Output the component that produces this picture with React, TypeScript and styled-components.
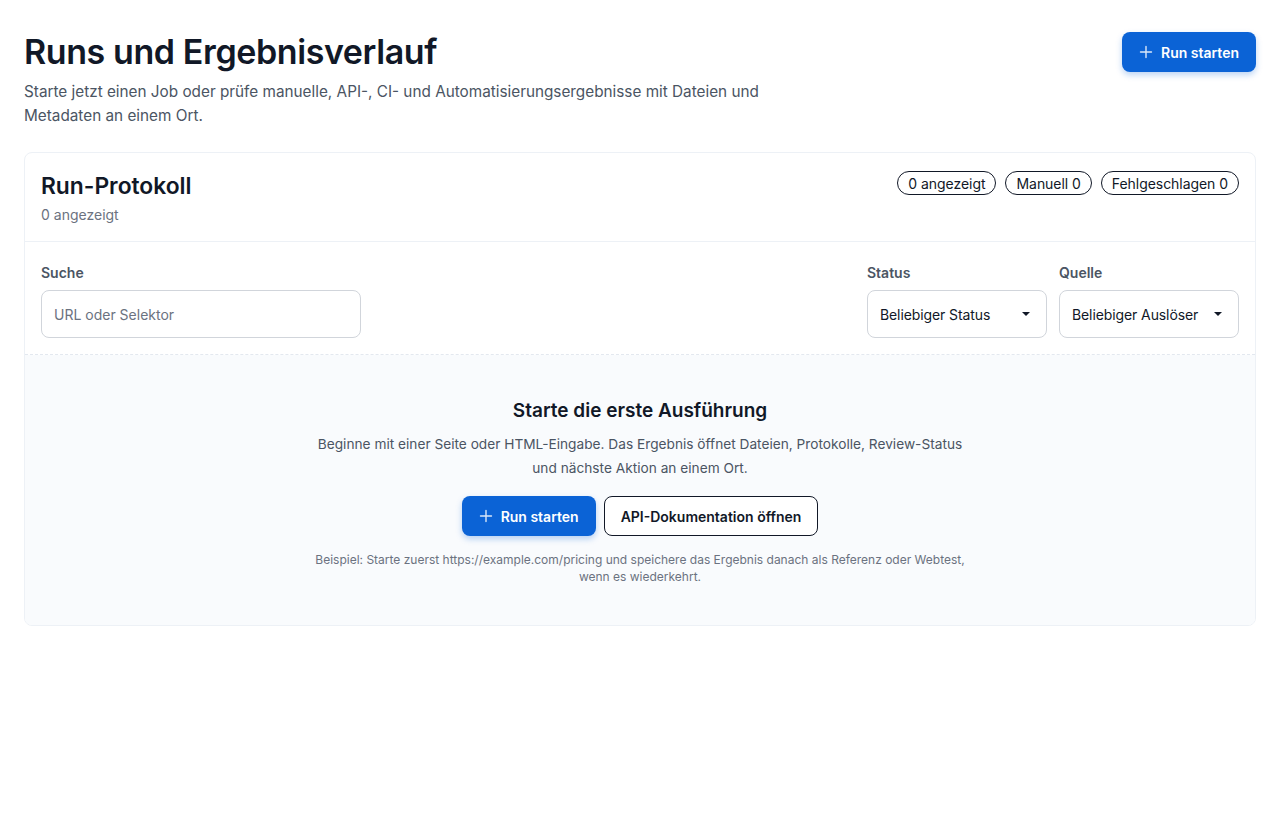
import React from "react";
import styled, { createGlobalStyle } from "styled-components";

const Global = createGlobalStyle`
  * { box-sizing: border-box; }
  html, body { margin: 0; padding: 0; background: #ffffff; }
  body {
    font-family: Inter, "Noto Sans", "Liberation Sans", sans-serif;
    color: #111827;
    -webkit-font-smoothing: antialiased;
  }
`;

const Page = styled.main`
  padding: 32px 24px 24px;
  display: flex;
  flex-direction: column;
  gap: 24px;
`;

const Header = styled.header`
  display: flex;
  justify-content: space-between;
  align-items: flex-start;
`;

const TitleBlock = styled.div`
  display: flex;
  flex-direction: column;
  gap: 8px;
`;

const Title = styled.h1`
  margin: 0;
  font-size: 34px;
  line-height: 40px;
  font-weight: 600;
  letter-spacing: -0.4px;
  color: #111827;
`;

const Lead = styled.p`
  margin: 0;
  max-width: 760px;
  font-size: 15.3px;
  line-height: 24px;
  color: #4b5563;
`;

const PrimaryButton = styled.button`
  display: inline-flex;
  align-items: center;
  gap: 8px;
  height: 40px;
  padding: 0 17px;
  border: none;
  border-radius: 8px;
  background: #0b63d6;
  color: #ffffff;
  font-family: inherit;
  font-size: 14px;
  font-weight: 600;
  box-shadow: 0 3px 6px rgba(11, 99, 214, 0.28);
  cursor: pointer;
`;

const SecondaryButton = styled.button`
  display: inline-flex;
  align-items: center;
  height: 40px;
  padding: 0 16px;
  border: 1px solid #111827;
  border-radius: 8px;
  background: #ffffff;
  color: #111827;
  font-family: inherit;
  font-size: 14px;
  font-weight: 600;
  cursor: pointer;
`;

const Card = styled.section`
  border: 1px solid #edf1f6;
  border-radius: 8px;
  background: #ffffff;
  overflow: hidden;
`;

const CardHead = styled.div`
  display: flex;
  justify-content: space-between;
  align-items: flex-start;
  padding: 18px 16px 16px;
  border-bottom: 1px solid #edf1f6;
`;

const CardTitle = styled.h2`
  margin: 0;
  font-size: 22.8px;
  line-height: 30px;
  font-weight: 600;
  color: #111827;
`;

const CardMeta = styled.div`
  margin-top: 4px;
  font-size: 14px;
  line-height: 20px;
  color: #6b7280;
`;

const Pills = styled.div`
  display: flex;
  gap: 9px;
`;

const Pill = styled.span`
  display: inline-flex;
  align-items: center;
  height: 24px;
  padding: 0 10px;
  border: 1px solid #111827;
  border-radius: 999px;
  font-size: 14px;
  letter-spacing: -0.05px;
  color: #111827;
`;

const Filters = styled.div`
  display: flex;
  align-items: flex-end;
  gap: 12px;
  padding: 21px 16px 16px;
  border-bottom: 1px dashed #e3e8ef;
`;

const Field = styled.label<{ $width: number; $grow?: boolean }>`
  display: flex;
  flex-direction: column;
  gap: 7px;
  width: ${(p) => p.$width}px;
  margin-right: ${(p) => (p.$grow ? "auto" : "0")};
`;

const FieldLabel = styled.span`
  font-size: 14px;
  line-height: 20px;
  font-weight: 600;
  color: #4b5563;
`;

const TextInput = styled.input`
  height: 48px;
  width: 100%;
  padding: 0 12px;
  border: 1px solid #d1d5db;
  border-radius: 8px;
  font-family: inherit;
  font-size: 14px;
  color: #111827;
  outline: none;
  &::placeholder { color: #6b7280; }
`;

const SelectBox = styled.div`
  height: 48px;
  display: flex;
  align-items: center;
  justify-content: space-between;
  padding: 0 16px 0 12px;
  border: 1px solid #d1d5db;
  border-radius: 8px;
  font-size: 14px;
  letter-spacing: -0.1px;
  color: #111827;
`;

const Caret = styled.span`
  width: 0;
  height: 0;
  border-left: 4px solid transparent;
  border-right: 4px solid transparent;
  border-top: 4px solid #111827;
`;

const Empty = styled.div`
  background: #f9fbfd;
  padding: 42px 24px 40px;
  display: flex;
  flex-direction: column;
  align-items: center;
  text-align: center;
`;

const EmptyTitle = styled.h3`
  margin: 0;
  font-size: 19px;
  line-height: 28px;
  font-weight: 600;
  color: #111827;
`;

const EmptyText = styled.p`
  margin: 7px 0 0;
  max-width: 660px;
  font-size: 13.7px;
  line-height: 24px;
  color: #4b5563;
`;

const Actions = styled.div`
  display: flex;
  gap: 8px;
  margin-top: 16px;
`;

const Hint = styled.p`
  margin: 15px 0 0;
  max-width: 660px;
  font-size: 12px;
  line-height: 17px;
  color: #6b7280;
`;

const PlusIcon = () => (
  <svg width="14" height="14" viewBox="0 0 14 14" fill="none" stroke="currentColor" strokeWidth="1.4" strokeLinecap="round" style={{ opacity: 0.85 }}>
    <path d="M7 1.5v11M1.5 7h11" />
  </svg>
);

export default function App() {
  return (
    <>
      <Global />
      <Page>
        <Header>
          <TitleBlock>
            <Title>Runs und Ergebnisverlauf</Title>
            <Lead>
              Starte jetzt einen Job oder prüfe manuelle, API-, CI- und Automatisierungsergebnisse mit Dateien und Metadaten an einem Ort.
            </Lead>
          </TitleBlock>
          <PrimaryButton>
            <PlusIcon />
            Run starten
          </PrimaryButton>
        </Header>

        <Card>
          <CardHead>
            <div>
              <CardTitle>Run-Protokoll</CardTitle>
              <CardMeta>0 angezeigt</CardMeta>
            </div>
            <Pills>
              <Pill>0 angezeigt</Pill>
              <Pill>Manuell 0</Pill>
              <Pill>Fehlgeschlagen 0</Pill>
            </Pills>
          </CardHead>

          <Filters>
            <Field $width={320} $grow>
              <FieldLabel>Suche</FieldLabel>
              <TextInput placeholder="URL oder Selektor" />
            </Field>
            <Field $width={180}>
              <FieldLabel>Status</FieldLabel>
              <SelectBox>
                Beliebiger Status
                <Caret />
              </SelectBox>
            </Field>
            <Field $width={180}>
              <FieldLabel>Quelle</FieldLabel>
              <SelectBox>
                Beliebiger Auslöser
                <Caret />
              </SelectBox>
            </Field>
          </Filters>

          <Empty>
            <EmptyTitle>Starte die erste Ausführung</EmptyTitle>
            <EmptyText>
              Beginne mit einer Seite oder HTML-Eingabe. Das Ergebnis öffnet Dateien, Protokolle, Review-Status und nächste Aktion an einem Ort.
            </EmptyText>
            <Actions>
              <PrimaryButton>
                <PlusIcon />
                Run starten
              </PrimaryButton>
              <SecondaryButton>API-Dokumentation öffnen</SecondaryButton>
            </Actions>
            <Hint>
              Beispiel: Starte zuerst https://example.com/pricing und speichere das Ergebnis danach als Referenz oder Webtest, wenn es wiederkehrt.
            </Hint>
          </Empty>
        </Card>
      </Page>
    </>
  );
}
